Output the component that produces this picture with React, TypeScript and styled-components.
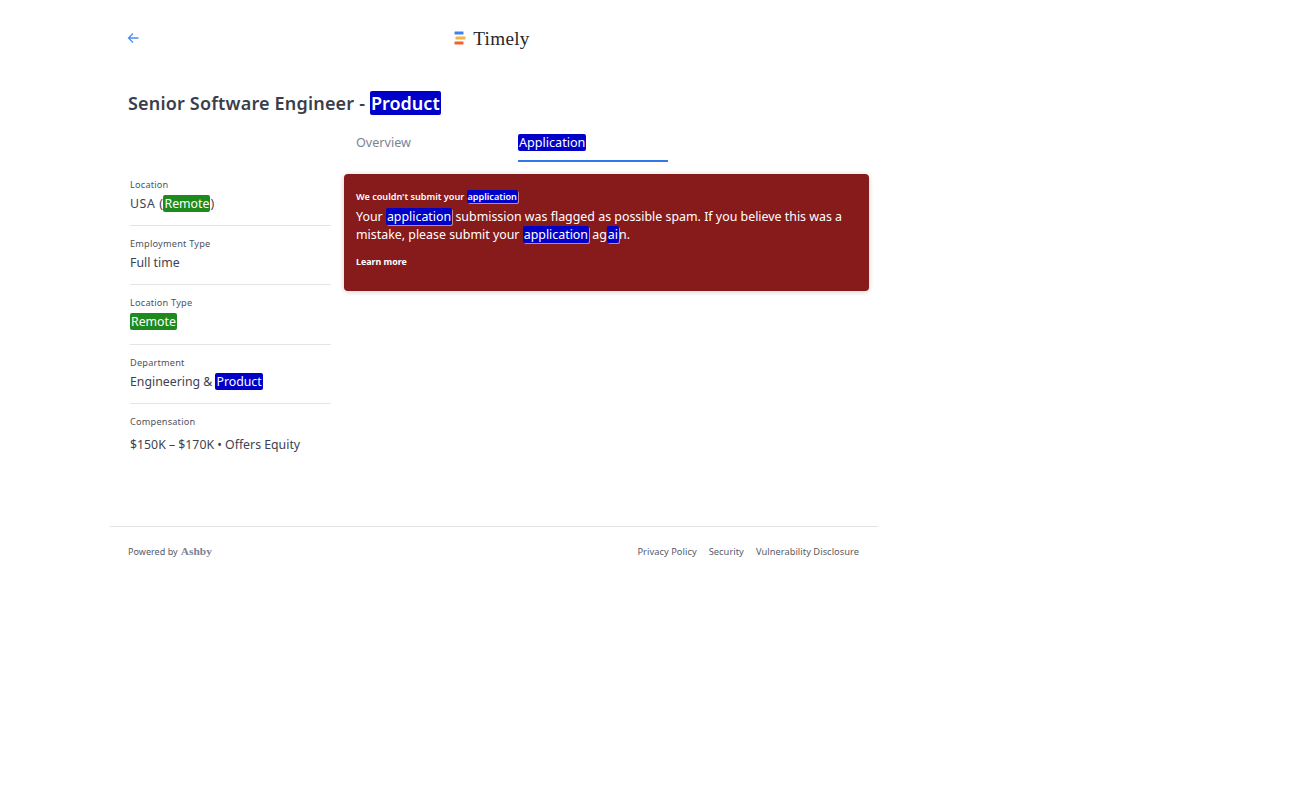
import { createGlobalStyle, styled } from "styled-components";

const GlobalStyle = createGlobalStyle`
  html, body {
    margin: 0;
    padding: 0;
    background: #fff;
    font-family: "Noto Sans", "Open Sans", sans-serif;
    color: #3b3f4c;
  }
`;

const Page = styled.div`
  width: 768px;
  margin-left: 110px;
`;

const Header = styled.header`
  display: grid;
  grid-template-columns: 1fr auto 1fr;
  align-items: center;
  height: 76px;
  padding: 0 21px 0 17px;
`;

const BackLink = styled.a`
  display: flex;
  color: #4b8df0;
`;

const Logo = styled.div`
  display: flex;
  align-items: center;
  gap: 7px;
`;

const LogoText = styled.span`
  margin-top: 2px;
  font-family: "Liberation Serif", serif;
  font-size: 19.2px;
  letter-spacing: 0.3px;
  color: #26262b;
`;

const Title = styled.h1`
  margin: 0;
  padding: 14px 18px 0;
  height: 36px;
  font-size: 18px;
  line-height: 26px;
  font-weight: 600;
  letter-spacing: 0.18px;
  color: #3a3e4b;
`;

const Mark = styled.span<{ $tone?: "blue" | "green"; $outlined?: boolean }>`
  background: ${(p) => (p.$tone === "green" ? "#1e8a1e" : "#0000c8")};
  color: #fff;
  border-radius: 2px;
  padding: 0 1px;
  letter-spacing: 0;
  ${(p) => (p.$outlined ? "box-shadow: 1px 1px 0 0 rgba(255,255,255,0.5);" : "")}
`;

const Layout = styled.div`
  display: grid;
  grid-template-columns: 201px 525px;
  column-gap: 13px;
  padding-left: 20px;
`;

const Sidebar = styled.aside`
  padding-top: 50.6px;
`;

const InfoBlock = styled.div<{ $last?: boolean }>`
  height: ${(p) => (p.$last ? "auto" : "47.5px")};
  border-bottom: ${(p) => (p.$last ? "none" : "1px solid #e4e4e7")};
  margin-bottom: 10.9px;
`;

const InfoLabel = styled.div`
  font-size: 9.2px;
  line-height: 14px;
  letter-spacing: 0.2px;
  color: #4e5260;
  margin-top: 1px;
`;

const InfoValue = styled.div<{ $gap?: number; $tracked?: boolean }>`
  font-size: 12.3px;
  line-height: 20px;
  margin-top: ${(p) => p.$gap ?? 2}px;
  letter-spacing: ${(p) => (p.$tracked ? "0.6px" : "0")};
  color: #3e4250;
`;

const Main = styled.main`
  display: flex;
  flex-direction: column;
`;

const Tabs = styled.nav`
  display: grid;
  grid-template-columns: 162px 150px;
  padding-left: 12px;
  height: 32px;
  margin-top: 2px;
`;

const Tab = styled.div<{ $active?: boolean }>`
  font-size: 12.6px;
  line-height: 20px;
  padding-top: 5px;
  height: 27px;
  color: #7d8294;
  border-bottom: 2px solid ${(p) => (p.$active ? "#2f78e8" : "transparent")};
`;

const Alert = styled.div`
  margin-top: 14px;
  height: 117px;
  box-sizing: border-box;
  padding: 15px 12px 0;
  background: #871a1a;
  border-radius: 4px;
  box-shadow: 0 1px 5px rgba(0, 0, 0, 0.2);
  color: #fff;
`;

const AlertTitle = styled.div`
  font-size: 9.1px;
  line-height: 15px;
  font-weight: 600;
`;

const AlertBody = styled.div`
  font-size: 12.4px;
  line-height: 18px;
  margin-top: 4px;
`;

const AlertLink = styled.a`
  display: block;
  font-size: 8.9px;
  line-height: 14px;
  font-weight: 700;
  margin-top: 11px;
`;

const Footer = styled.footer`
  display: flex;
  justify-content: space-between;
  align-items: center;
  height: 48px;
  margin-top: 60px;
  padding: 0 19px 0 18px;
  border-top: 1px solid #e4e4e7;
  font-size: 9.3px;
  letter-spacing: 0.04px;
  color: #565a68;
`;

const Powered = styled.div`
  display: flex;
  align-items: baseline;
  gap: 3px;
  font-size: 9px;
`;

const Brand = styled.span`
  font-family: "Liberation Serif", serif;
  font-weight: 700;
  font-size: 11.4px;
  color: #7c8296;
`;

const FooterLinks = styled.div`
  display: flex;
  gap: 12px;
`;

const LogoMark = () => (
  <svg width="12" height="14" viewBox="0 0 12 14">
    <rect x="0.5" y="0.5" width="9" height="3" rx="0.5" fill="#3f83ee" />
    <rect x="1.5" y="5.5" width="10" height="3" rx="0.5" fill="#f5b23c" />
    <rect x="0.5" y="10.5" width="9" height="3" rx="0.5" fill="#f2622e" />
  </svg>
);

const ArrowLeft = () => (
  <svg width="12" height="12" viewBox="0 0 12 12" fill="none" stroke="currentColor" strokeWidth="1.3">
    <path d="M11.5 6H1.5M6 1.5L1.5 6 6 10.5" />
  </svg>
);

export default function App() {
  return (
    <Page>
      <GlobalStyle />
      <Header>
        <BackLink>
          <ArrowLeft />
        </BackLink>
        <Logo>
          <LogoMark />
          <LogoText>Timely</LogoText>
        </Logo>
      </Header>
      <Title>
        Senior Software Engineer - <Mark>Product</Mark>
      </Title>
      <Layout>
        <Sidebar>
          <InfoBlock>
            <InfoLabel>Location</InfoLabel>
            <InfoValue $tracked>
              USA (<Mark $tone="green">Remote</Mark>)
            </InfoValue>
          </InfoBlock>
          <InfoBlock>
            <InfoLabel>Employment Type</InfoLabel>
            <InfoValue>Full time</InfoValue>
          </InfoBlock>
          <InfoBlock>
            <InfoLabel>Location Type</InfoLabel>
            <InfoValue>
              <Mark $tone="green">Remote</Mark>
            </InfoValue>
          </InfoBlock>
          <InfoBlock>
            <InfoLabel>Department</InfoLabel>
            <InfoValue>
              Engineering &amp; <Mark>Product</Mark>
            </InfoValue>
          </InfoBlock>
          <InfoBlock $last>
            <InfoLabel>Compensation</InfoLabel>
            <InfoValue $gap={6}>$150K – $170K • Offers Equity</InfoValue>
          </InfoBlock>
        </Sidebar>
        <Main>
          <Tabs>
            <Tab>Overview</Tab>
            <Tab $active>
              <Mark>Application</Mark>
            </Tab>
          </Tabs>
          <Alert>
            <AlertTitle>
              We couldn't submit your <Mark $outlined>application</Mark>
            </AlertTitle>
            <AlertBody>
              Your <Mark $outlined>application</Mark> submission was flagged as possible spam. If you believe this was a
              mistake, please submit your <Mark $outlined>application</Mark> ag<Mark $outlined>ai</Mark>n.
            </AlertBody>
            <AlertLink>Learn more</AlertLink>
          </Alert>
        </Main>
      </Layout>
      <Footer>
        <Powered>
          Powered by <Brand>Ashby</Brand>
        </Powered>
        <FooterLinks>
          <span>Privacy Policy</span>
          <span>Security</span>
          <span>Vulnerability Disclosure</span>
        </FooterLinks>
      </Footer>
    </Page>
  );
}
